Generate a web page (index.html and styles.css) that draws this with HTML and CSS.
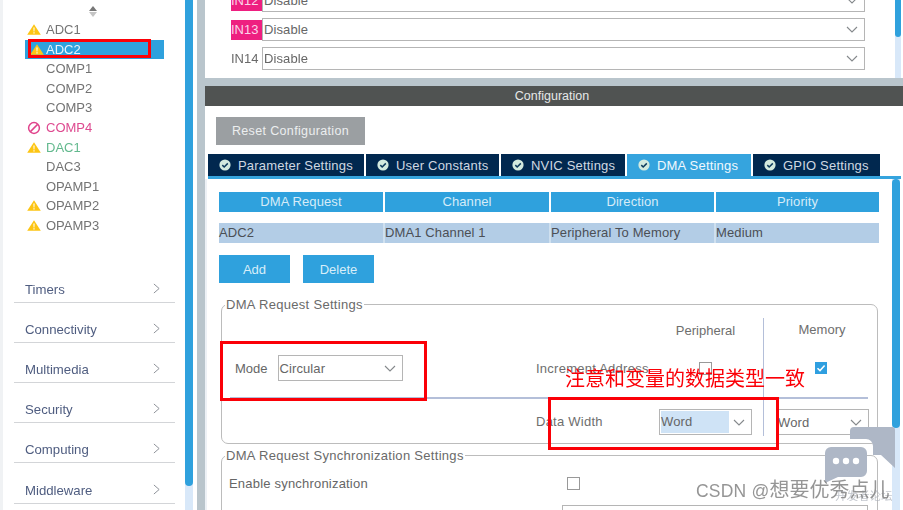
FILE: index.html
```html
<!DOCTYPE html>
<html lang="en">
<head>
<meta charset="utf-8">
<title>DMA Settings</title>
<link rel="stylesheet" href="styles.css">
</head>
<body>
<svg class="defs" width="0" height="0" aria-hidden="true">
  <symbol id="warn" viewBox="0 0 14 11"><path d="M7 .3 13.8 10.7H.2Z" fill="#fdc513"/><path d="M6.4 3.5h1.2l-.2 4H6.6Zm0 4.8h1.2v1.2H6.4Z" fill="#fff"/></symbol>
  <symbol id="chev-r" viewBox="0 0 8 12"><path d="M1 .8 7 6 1 11.2" fill="none" stroke="#8a8f96" stroke-width="1.1"/></symbol>
  <symbol id="chev-d" viewBox="0 0 12 7"><path d="M1 1 6 6l5-5" fill="none" stroke="#85898c" stroke-width="1.1"/></symbol>
  <symbol id="ok" viewBox="0 0 12 12"><circle cx="6" cy="6" r="5.6" fill="#d3eadf"/><path d="M3.3 6.1 5.2 8l3.6-3.6" fill="none" stroke="#0d3a5c" stroke-width="1.5"/></symbol>
</svg>

<div class="app">
  <aside class="sidebar">
    <div class="side-content">
      <div class="spinner"><span class="up"></span><span class="down"></span></div>
      <ul class="ip-list">
        <li class="ip"><svg class="warn"><use href="#warn"/></svg>ADC1</li>
        <li class="ip selected"><svg class="warn"><use href="#warn"/></svg>ADC2</li>
        <li class="ip"><span class="no-icon"></span>COMP1</li>
        <li class="ip"><span class="no-icon"></span>COMP2</li>
        <li class="ip"><span class="no-icon"></span>COMP3</li>
        <li class="ip ip-bad"><svg class="warn" viewBox="0 0 14 14"><circle cx="7" cy="7" r="5.4" fill="none" stroke="#e0438c" stroke-width="1.5"/><path d="M3.4 10.6 10.6 3.4" stroke="#e0438c" stroke-width="1.5"/></svg>COMP4</li>
        <li class="ip ip-good"><svg class="warn"><use href="#warn"/></svg>DAC1</li>
        <li class="ip"><span class="no-icon"></span>DAC3</li>
        <li class="ip"><span class="no-icon"></span>OPAMP1</li>
        <li class="ip"><svg class="warn"><use href="#warn"/></svg>OPAMP2</li>
        <li class="ip"><svg class="warn"><use href="#warn"/></svg>OPAMP3</li>
      </ul>
      <ul class="cats">
        <li class="cat">Timers<svg class="chev-r"><use href="#chev-r"/></svg></li>
        <li class="cat">Connectivity<svg class="chev-r"><use href="#chev-r"/></svg></li>
        <li class="cat">Multimedia<svg class="chev-r"><use href="#chev-r"/></svg></li>
        <li class="cat">Security<svg class="chev-r"><use href="#chev-r"/></svg></li>
        <li class="cat">Computing<svg class="chev-r"><use href="#chev-r"/></svg></li>
        <li class="cat">Middleware<svg class="chev-r"><use href="#chev-r"/></svg></li>
      </ul>
    </div>
    <div class="scroll side-scroll"><div class="thumb"></div></div>
  </aside>
  <div class="divider"></div>

  <main class="main">
    <section class="top-panel">
      <div class="in-rows">
        <div class="in-row"><span class="in-label pink">IN12</span><div class="select grow"><span>Disable</span><svg class="chev-d"><use href="#chev-d"/></svg></div></div>
        <div class="in-row"><span class="in-label pink">IN13</span><div class="select grow"><span>Disable</span><svg class="chev-d"><use href="#chev-d"/></svg></div></div>
        <div class="in-row"><span class="in-label">IN14</span><div class="select grow"><span>Disable</span><svg class="chev-d"><use href="#chev-d"/></svg></div></div>
      </div>
      <div class="scroll top-scroll"><div class="thumb"></div></div>
    </section>
    <div class="hbar"></div>
    <header class="config-head">Configuration</header>
    <section class="config">
      <button class="reset">Reset Configuration</button>
      <nav class="tabs">
        <div class="tab t1"><svg class="ok"><use href="#ok"/></svg>Parameter Settings</div>
        <div class="tab t2"><svg class="ok"><use href="#ok"/></svg>User Constants</div>
        <div class="tab t3"><svg class="ok"><use href="#ok"/></svg>NVIC Settings</div>
        <div class="tab t4 active"><svg class="ok"><use href="#ok"/></svg>DMA Settings</div>
        <div class="tab t5"><svg class="ok"><use href="#ok"/></svg>GPIO Settings</div>
      </nav>
      <div class="tab-body">
        <div class="tab-content">
          <div class="table">
            <div class="th">DMA Request</div><div class="th">Channel</div><div class="th">Direction</div><div class="th">Priority</div>
          </div>
          <div class="table data">
            <div class="td">ADC2</div><div class="td">DMA1 Channel 1</div><div class="td">Peripheral To Memory</div><div class="td">Medium</div>
          </div>
          <div class="actions">
            <button class="btn">Add</button>
            <button class="btn">Delete</button>
          </div>
          <fieldset class="group req">
            <legend>DMA Request Settings</legend>
            <div class="req-grid">
              <span></span><span></span>
              <span class="col-head">Peripheral</span><span></span>
              <span class="col-head mem-cell">Memory</span>

              <div class="mode-cell"><span class="mode-label">Mode</span><div class="select mode"><span>Circular</span><svg class="chev-d"><use href="#chev-d"/></svg></div></div>
              <span class="lbl lift">Increment Address</span>
              <span class="check-cell lift"><i class="check"></i></span><span></span>
              <span class="check-cell mem-cell lift"><svg class="checked" viewBox="0 0 12 12"><rect width="12" height="12" fill="#2f9fe0"/><path d="M2.5 6.2 5 8.6l4.6-5" fill="none" stroke="#fff" stroke-width="1.5"/></svg></span>

              <div class="rule"></div>

              <span></span>
              <span class="lbl drop">Data Width</span>
              <div class="select word hl"><span>Word</span><svg class="chev-d"><use href="#chev-d"/></svg></div><span></span>
              <div class="mem-cell"><div class="select word"><span>Word</span><svg class="chev-d"><use href="#chev-d"/></svg></div></div>
            </div>
          </fieldset>
          <fieldset class="group sync">
            <legend>DMA Request Synchronization Settings</legend>
            <div class="sync-row"><span class="sync-label">Enable synchronization</span><i class="check sync-check"></i></div>
            <div class="sync-select"></div>
          </fieldset>
        </div>
        <div class="scroll body-scroll"><div class="thumb"></div></div>
      </div>
    </section>
  </main>
</div>

<div class="mark m-adc"></div>
<div class="mark m-mode"></div>
<div class="mark m-width"></div>
<div class="note">注意和变量的数据类型一致</div>
<svg class="bubbles" viewBox="0 0 70 56" aria-hidden="true">
  <path d="M29 0h38a3 3 0 0 1 3 3v38l-14-13H48V19a7 7 0 0 0-7-7H25V4a4 4 0 0 1 4-4Z" fill="#aeb7c6"/>
  <path d="M6 20h30a6 6 0 0 1 6 6v18a6 6 0 0 1-6 6H13L0 56V26a6 6 0 0 1 6-6Z" fill="#aeb7c6"/>
  <circle cx="11" cy="34" r="3.2" fill="#fff"/><circle cx="21" cy="34" r="3.2" fill="#fff"/><circle cx="31" cy="34" r="3.2" fill="#fff"/>
</svg>
<div class="wm-small">开发者论坛</div>
<div class="wm">CSDN @<span class="wm-cjk">想要优秀点儿</span></div>
</body>
</html>
```
FILE: styles.css
```css
* { box-sizing: border-box; }
html, body { margin: 0; height: 510px; overflow: hidden; background: #fff; }
body { font-family: "Liberation Sans", Arial, sans-serif; font-size: 13px; color: #666; position: relative; }
ul { list-style: none; margin: 0; padding: 0; }
button { font: inherit; border: 0; padding: 0; }
i { display: block; font-style: normal; }
.defs { position: absolute; }

.app { display: flex; width: 903px; height: 510px; filter: blur(.35px); }

/* left column */
.sidebar { width: 193px; height: 510px; display: flex; border-left: 3px solid #f0f2f4; }
.side-content { width: 182px; }
.spinner { height: 20px; padding: 6px 0 0 83px; display: flex; flex-direction: column; gap: 1px; }
.spinner span { width: 0; height: 0; border-left: 4px solid transparent; border-right: 4px solid transparent; margin-left: 3px; }
.spinner .up { border-bottom: 5px solid #777; }
.spinner .down { border-top: 5px solid #c4c4c4; }
.ip-list { margin-left: 22px; width: 139px; }
.ip { height: 19.55px; display: flex; align-items: center; color: #737373; }
.warn { width: 14px; height: 11px; margin: 0 5px 0 2px; flex: none; }
.ip-bad .warn { height: 14px; }
.no-icon { width: 21px; flex: none; }
.selected { background: #2fa1dd; color: #e9f4fb; }
.selected .warn { margin-left: 5px; margin-right: 2px; }
.ip-bad { color: #de4a90; }
.ip-good { color: #63b98e; }

.cats { margin: 28px 0 0 11px; width: 161px; }
.cat { height: 40.1px; border-bottom: 1.4px solid #d3d5d8; padding: 0 15px 5px 11px; display: flex; justify-content: space-between; align-items: flex-end; color: #4f5d80; font-size: 13.2px; }
.chev-r { width: 7px; height: 11px; margin-bottom: 3px; }

.scroll { width: 8px; flex: none; background: #d8e8f9; }
.thumb { background: #2fa1dd; border-radius: 0 0 4px 4px; }
.side-scroll .thumb { height: 486px; }
.divider { width: 12px; flex: none; border-left: 4px solid #fff; background: #b9c5cc; }

/* right column */
.main { width: 698px; height: 510px; display: flex; flex-direction: column; overflow: hidden; }
.top-panel { height: 78px; flex: none; display: flex; overflow: hidden; }
.in-rows { width: 660px; padding-left: 26px; margin-top: -11px; display: flex; flex-direction: column; gap: 6px; }
.in-row { display: flex; align-items: center; height: 23px; flex: none; }
.in-label { width: 31px; flex: none; height: 20px; line-height: 20px; color: #6a6a6a; }
.pink { background: #ee1f80; color: #fbd5e8; }
.grow { flex: 1; height: 23px; }
.top-scroll { width: 6px; margin-left: 30px; height: 78px; }
.top-scroll .thumb { height: 37px; border-radius: 0 0 3px 3px; }

.select { display: flex; align-items: center; justify-content: space-between; padding: 0 6px 0 1px; background: #fff; border: 1px solid #b5b5b5; color: #666; letter-spacing: .1px; }
.chev-d { width: 12px; height: 7px; flex: none; }

.hbar { height: 8px; flex: none; background: #b9c5cc; }
.config-head { height: 20px; flex: none; background: #505352; color: #e6e8e8; text-align: center; line-height: 20px; font-size: 12.5px; padding-right: 4px; }
.config { flex: 1; min-height: 0; background: #fff; }
.reset { display: block; margin: 11px 0 0 11px; width: 149px; height: 28px; background: #9b9fa2; color: #eceeef; letter-spacing: .35px; font-size: 12.5px; }
.tabs { display: flex; gap: 2px; margin: 9px 2px 0 3px; height: 25px; border-bottom: 3px solid #35a4de; }
.tab { height: 22px; background: #01284f; color: #cfd8e2; letter-spacing: .2px; display: flex; align-items: center; padding-left: 11px; gap: 7px; white-space: nowrap; }
.t1 { width: 156px; } .t2 { width: 133px; } .t3 { width: 124px; } .t4 { width: 124px; } .t5 { width: 127px; }
.active { background: #35a4de; color: #f0f8fd; }
.ok { width: 12px; height: 12px; flex: none; }

.tab-body { display: flex; height: 331px; overflow: hidden; border-left: 2px solid #edf1f6; }
.tab-content { width: 685px; padding: 13px 0 0 12px; flex: none; }
.body-scroll { height: 331px; }
.body-scroll .thumb { height: 249px; border-radius: 4px; }
.table { display: grid; grid-template-columns: 164px 164px 163px 163px; gap: 2px; width: 660px; }
.th { height: 20px; background: #2fa1dd; color: #d6ecf8; text-align: center; line-height: 20px; letter-spacing: .1px; }
.data { margin-top: 11px; background: #cfe0ef; }
.td { height: 20px; background: #b3cde6; color: #4b4f55; line-height: 20px; letter-spacing: .12px; }
.actions { display: flex; gap: 13px; margin-top: 12px; }
.btn { width: 71px; height: 28px; background: #2fa1dd; color: #d8eef9; }

.group { margin: 0 0 0 2px; padding: 0; width: 657px; border: 1.3px solid #bcbcbc; border-radius: 7px; }
.group legend { margin-left: 3px; padding: 0 1px; color: #6a6a6a; line-height: 15px; letter-spacing: .3px; }
.req { margin-top: 14px; height: 147px; }
.req-grid { display: grid; margin: 6px 0 0 8px; grid-template-columns: 306px 123px 93px 11px 105px; grid-template-rows: 24px 55px 2px 37px; }
.col-head { text-align: center; align-self: center; color: #6e6e6e; }
.mem-cell { border-left: 1.5px solid #b4bfd9; padding-left: 12px; }
.col-head.mem-cell { align-self: stretch; line-height: 24px; }
.mode-cell { display: flex; align-items: center; padding: 0 0 3px 5px; gap: 10px; }
.mode-label { color: #666; }
.mode { width: 125px; height: 26px; }
.lbl { align-self: center; color: #6e6e6e; letter-spacing: .25px; }
.lift { padding-bottom: 3px; }
.drop { padding-top: 7px; }
.check-cell { display: flex; align-items: center; justify-content: center; }
.check { width: 13px; height: 13px; border: 1.5px solid #999; background: #fff; }
.checked { width: 12px; height: 12px; margin-right: 2px; }
.rule { grid-column: 1 / -1; background: #b4bfd9; }
.word { width: 93px; height: 26px; margin-top: 10px; }
.hl span { background: #cfe3f6; width: 68px; line-height: 22px; }
.sync { margin-top: 4px; height: 82px; }
.sync-row { display: flex; align-items: center; margin-top: 9px; padding-left: 7px; height: 22px; }
.sync-label { width: 338px; color: #666; letter-spacing: .2px; }
.sync-select { margin: 11px 0 0 340px; width: 306px; height: 30px; border: 1px solid #b5b5b5; }

/* annotations drawn over the screenshot */
.mark { position: absolute; border: 3px solid #fb0007; }
.m-adc { left: 28px; top: 39px; width: 123px; height: 19px; }
.m-mode { left: 220px; top: 341px; width: 207px; height: 60px; }
.m-width { left: 548px; top: 397px; width: 231px; height: 53px; }
.note { position: absolute; left: 565px; top: 366px; font: 20px/24px "Noto Sans CJK SC", sans-serif; color: #fb0007; white-space: nowrap; }
.bubbles { position: absolute; left: 825px; top: 427px; width: 70px; height: 56px; }
.wm { position: absolute; left: 696px; top: 479px; font: 17.5px/22px "Liberation Sans", "Noto Sans CJK SC", sans-serif; color: rgba(130,130,130,.85); white-space: nowrap; letter-spacing: .2px; }
.wm-cjk { font-size: 20px; letter-spacing: 0; }
.wm-small { position: absolute; left: 835px; top: 488px; font: 11.5px/14px "Noto Sans CJK SC", sans-serif; color: rgba(170,175,185,.7); white-space: nowrap; }
```
